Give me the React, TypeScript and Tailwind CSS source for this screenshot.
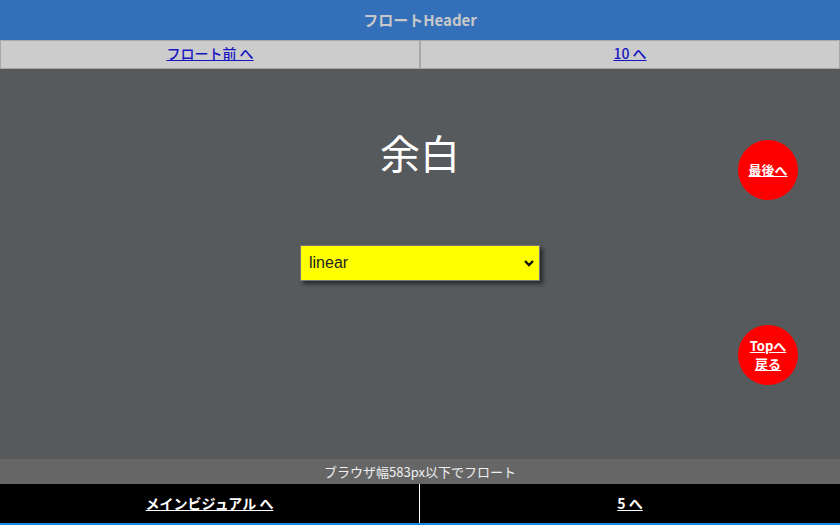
export default function App() {
  return (
    <div className="relative flex h-[525px] w-[840px] flex-col overflow-hidden font-['Noto_Sans_CJK_JP','Liberation_Sans',sans-serif]">
      <header className="flex h-[40px] items-center justify-center bg-[#3370b9] text-[15px] font-bold text-[#c8c8c8]">
        フロートHeader
      </header>

      <nav className="grid h-[29px] grid-cols-2 bg-[#cccccd] text-[14px] font-medium">
        <div className="flex items-center justify-center border border-[#a8a8a8] pb-[2px]">
          <a href="#" className="text-[#1616c0] underline">フロート前 へ</a>
        </div>
        <div className="flex items-center justify-center border border-[#a8a8a8] pb-[2px]">
          <a href="#" className="text-[#1616c0] underline">10 へ</a>
        </div>
      </nav>

      <main className="flex h-[390px] flex-col items-center bg-[#575a5d]">
        <h1 className="mt-[58px] text-[40px] leading-[50px] text-white">余白</h1>
        <div className="relative mt-[68px]">
          <select
            defaultValue="linear"
            className="h-[36px] w-[240px] appearance-none border border-[#777] bg-[#ffff00] pl-[8px] text-[16px] text-[#222] shadow-[3px_3px_4px_rgba(0,0,0,0.55)] font-['Liberation_Sans',sans-serif]"
          >
            <option value="linear">linear</option>
            <option value="ease">ease</option>
          </select>
          <svg className="pointer-events-none absolute right-[4px] top-[13px]" width="14" height="10" viewBox="0 0 14 10">
            <path d="M3 3 L7 7 L11 3" fill="none" stroke="#111" strokeWidth="2.4" />
          </svg>
        </div>
      </main>

      <div className="flex h-[25px] items-center justify-center bg-[#666] text-[13px] text-[#f0f0f0]">
        ブラウザ幅583px以下でフロート
      </div>

      <nav className="grid h-[39px] grid-cols-2 bg-black text-[14px] font-bold text-white">
        <div className="flex items-center justify-center border-r border-white">
          <a href="#" className="underline">メインビジュアル へ</a>
        </div>
        <div className="flex items-center justify-center">
          <a href="#" className="underline">5 へ</a>
        </div>
      </nav>
      <div className="h-[2px] bg-[#1e8ae6]" />

      <a
        href="#"
        className="absolute left-[738px] top-[140px] flex h-[60px] w-[60px] items-center justify-center rounded-full bg-[#ff0000] text-[13px] font-bold text-white underline"
      >
        最後へ
      </a>
      <a
        href="#"
        className="absolute left-[738px] top-[325px] flex h-[60px] w-[60px] flex-col items-center justify-center rounded-full bg-[#ff0000] text-center text-[13px] font-bold leading-[18px] text-white underline"
      >
        <span>Topへ</span>
        <span>戻る</span>
      </a>
    </div>
  );
}
